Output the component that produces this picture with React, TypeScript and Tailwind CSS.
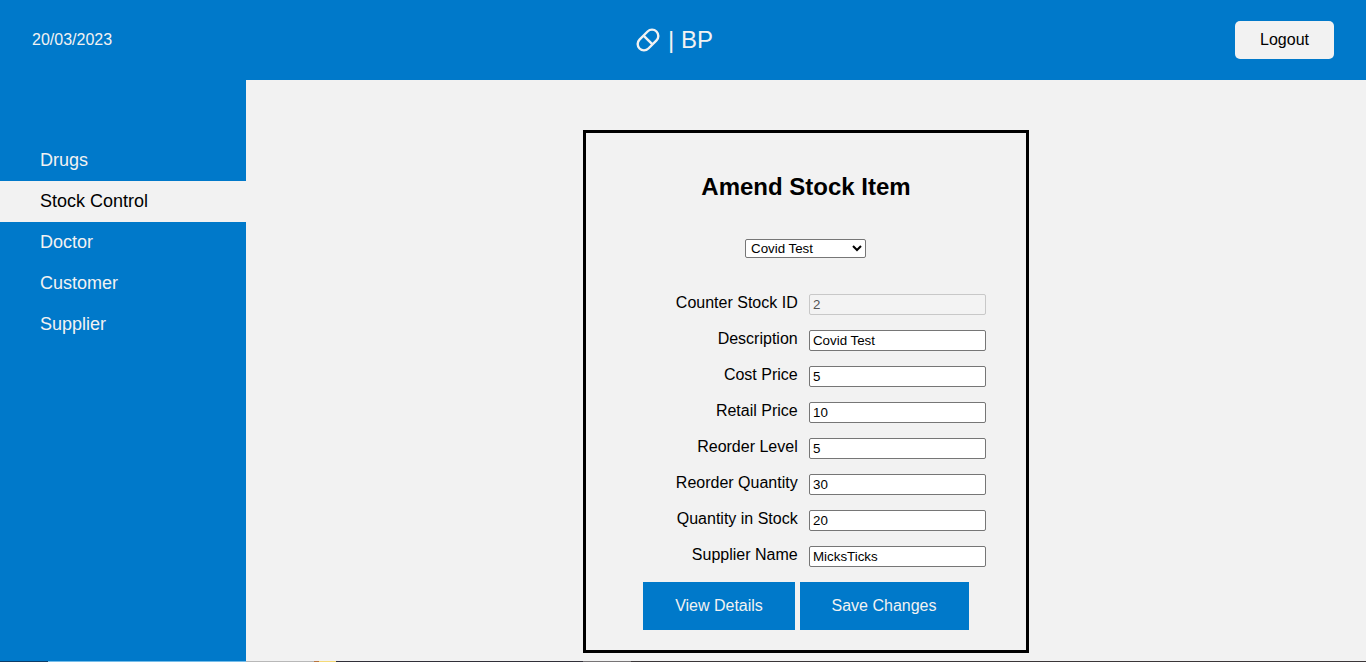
const navItems = ["Drugs", "Stock Control", "Doctor", "Customer", "Supplier"];
const activeItem = "Stock Control";

const fields = [
  { label: "Counter Stock ID", value: "2", disabled: true },
  { label: "Description", value: "Covid Test" },
  { label: "Cost Price", value: "5" },
  { label: "Retail Price", value: "10" },
  { label: "Reorder Level", value: "5" },
  { label: "Reorder Quantity", value: "30" },
  { label: "Quantity in Stock", value: "20" },
  { label: "Supplier Name", value: "MicksTicks" },
];

function CapsuleIcon() {
  return (
    <svg width="24" height="24" viewBox="0 0 24 24" fill="none" stroke="currentColor" strokeWidth="2.4">
      <g transform="rotate(-45 12 12)">
        <rect x="0" y="5.7" width="24" height="12.6" rx="6.3" />
        <path d="M12 5.7v12.6" />
      </g>
    </svg>
  );
}

function Header() {
  return (
    <header className="grid h-20 shrink-0 grid-cols-3 items-center bg-[#0079ca] px-8 text-[#f2f2f2]">
      <span className="text-base">20/03/2023</span>
      <div className="flex items-center justify-center gap-2 pr-[17px] text-2xl">
        <CapsuleIcon />
        <span>| BP</span>
      </div>
      <button className="h-[38px] w-[99px] justify-self-end rounded-[5px] bg-[#f2f2f2] pb-px text-base text-black">
        Logout
      </button>
    </header>
  );
}

function Sidebar() {
  return (
    <nav className="w-[246px] shrink-0 bg-[#0079ca] pt-[60px]">
      {navItems.map((item) => (
        <a
          key={item}
          className={
            item === activeItem
              ? "flex h-[41px] items-center bg-[#f2f2f2] pb-0.5 pl-10 text-lg text-black"
              : "flex h-[41px] items-center pb-0.5 pl-10 text-lg text-[#f2f2f2]"
          }
        >
          {item}
        </a>
      ))}
    </nav>
  );
}

function AmendForm() {
  return (
    <form className="flex h-[523px] w-[446px] flex-col items-center border-[3px] border-black">
      <h1 className="mt-[38px] text-2xl font-bold">Amend Stock Item</h1>
      <select
        defaultValue="Covid Test"
        className="mt-9 mr-px h-[19px] w-[121px] shrink-0 rounded-[2px] border border-[#767676] bg-white pl-px text-[13.333px] leading-none"
      >
        <option>Covid Test</option>
      </select>
      <div className="mt-9 flex flex-col gap-[15px] self-start pl-[60px]">
        {fields.map((field) => (
          <label key={field.label} className="flex h-[21px]">
            <span className="-mt-[3px] w-[151.7px] text-right text-base">{field.label}</span>
            <input
              defaultValue={field.value}
              disabled={field.disabled}
              className="ml-[11.3px] h-[21px] w-[177px] rounded-[2px] border border-[#767676] bg-white px-[3px] text-[13.333px] disabled:border-[#c8c8c8] disabled:bg-[#f3f3f3] disabled:text-[#545454]"
            />
          </label>
        ))}
      </div>
      <div className="mt-[15px] flex gap-[5px] self-start pl-[57px] text-base text-[#f2f2f2]">
        <button type="button" className="h-12 w-[152px] bg-[#0079ca] pb-px">View Details</button>
        <button type="button" className="h-12 w-[169px] bg-[#0079ca] pr-px pb-px">Save Changes</button>
      </div>
    </form>
  );
}

export default function App() {
  return (
    <div className="flex h-[662px] flex-col overflow-hidden bg-[#f2f2f2] font-['Liberation_Sans',Arial,sans-serif] text-black">
      <Header />
      <div className="flex min-h-0 flex-1">
        <Sidebar />
        <main className="flex flex-1 items-start justify-center pt-[50px]">
          <AmendForm />
        </main>
      </div>
      <div className="flex h-px shrink-0 bg-[#3a3638]">
        <div className="w-12 bg-[#0b3c68]" />
        <div className="w-[198px] bg-[#74bdea]" />
        <div className="w-[68px] bg-[#b8b8b8]" />
        <div className="w-[5px] bg-[#b8743f]" />
        <div className="w-[17px] bg-[#f5da78]" />
        <div className="w-[247px] bg-[#302f38]" />
        <div className="w-12 bg-[#777476]" />
      </div>
    </div>
  );
}
